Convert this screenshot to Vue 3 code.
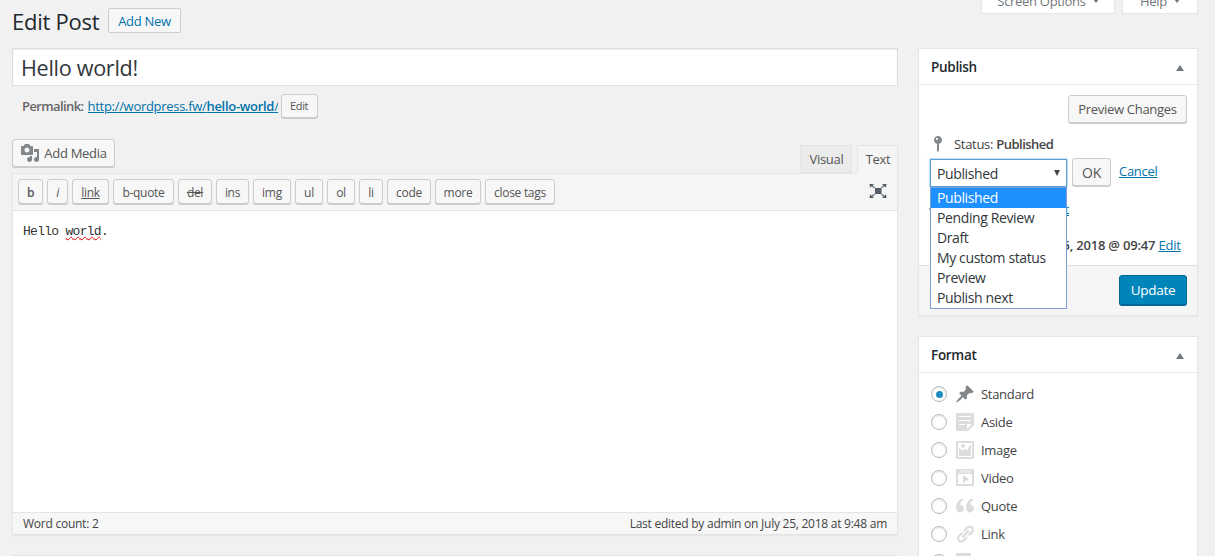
<script setup>
const tools = [
  { t: 'b', w: 25, c: 'bold' }, { t: 'i', w: 21, c: 'ital' }, { t: 'link', w: 37, c: 'ul' },
  { t: 'b-quote', w: 61 }, { t: 'del', w: 34, c: 'strike' }, { t: 'ins', w: 33 }, { t: 'img', w: 38 },
  { t: 'ul', w: 28 }, { t: 'ol', w: 28 }, { t: 'li', w: 24 }, { t: 'code', w: 44 }, { t: 'more', w: 46 }, { t: 'close tags', w: 70 }
]
const options = ['Published', 'Pending Review', 'Draft', 'My custom status', 'Preview', 'Publish next']
const formats = [
  { t: 'Standard', on: true, d: 'M10.44 3.02l1.82-1.82 6.36 6.35-1.83 1.82c-1.05-.68-2.48-.57-3.41.36l-.75.75c-.92.93-1.04 2.35-.35 3.41l-1.83 1.82-2.41-2.41-2.8 2.79c-.42.42-3.38 2.71-3.8 2.29s1.86-3.39 2.28-3.81l2.79-2.79L4.1 9.36l1.83-1.82c1.05.69 2.48.57 3.4-.36l.75-.75c.93-.92 1.05-2.35.36-3.41z' },
  { t: 'Aside', d: 'M1 1h18v12l-6 6H1V1zm3 3v1h12V4H4zm0 4v1h12V8H4zm6 5v-1H4v1h6zm2 4l5-5h-5v5z' },
  { t: 'Image', d: 'M2.25 1h15.5c.69 0 1.25.56 1.25 1.25v15.5c0 .69-.56 1.25-1.25 1.25H2.25C1.56 19 1 18.44 1 17.75V2.25C1 1.56 1.56 1 2.25 1zM17 17V3H3v14h14zM10 6c0-1.1-.9-2-2-2s-2 .9-2 2 .9 2 2 2 2-.9 2-2zm3 5s0-6 3-6v10c0 .55-.45 1-1 1H5c-.55 0-1-.45-1-1V8c2 0 3 4 3 4s1-3 3-3 3 2 3 2z' },
  { t: 'Video', d: 'M2 1h16c.55 0 1 .45 1 1v16l-18-.02V2c0-.55.45-1 1-1zm4 1L4 5h1l2-3H6zm4 0H9L7 5h1zm3 0h-1l-2 3h1zm3 0h-1l-2 3h1zm1 14V6H3v10h14zM8 7l6 4-6 4V7z' },
  { t: 'Quote', d: 'M9 12.600c0 2.100-1.800 3.900-4 3.900-2.500 0-4-2-4-5C1 7 3.800 3.300 7.800 2.500l.6 1.600C6.400 5 5.300 6.700 5.200 8.700 7.300 8.600 9 10.400 9 12.600zm10 0c0 2.100-1.800 3.900-4 3.900-2.500 0-4-2-4-5 0-4.500 2.800-8.200 6.800-9l.6 1.600c-2 .9-3.100 2.600-3.200 4.600 2.100-.1 3.800 1.700 3.800 3.900z' },
  { t: 'Link', d: 'M17.740 2.760c1.680 1.690 1.680 4.410 0 6.100l-1.530 1.520c-1.120 1.120-2.700 1.470-4.140 1.090l2.620-2.610.76-.77.76-.76c.84-.84.84-2.200 0-3.040-.84-.85-2.200-.85-3.040 0l-.77.76-3.380 3.380c-.37-1.440-.02-3.020 1.100-4.140l1.520-1.530c1.690-1.680 4.420-1.680 6.100 0zM8.590 13.430l5.340-5.340c.42-.42.42-1.100 0-1.520-.44-.43-1.130-.39-1.530 0l-5.330 5.340c-.42.42-.42 1.100 0 1.520.44.43 1.130.39 1.520 0zm-.76 2.290l4.140-4.150c.38 1.440.03 3.020-1.090 4.140l-1.520 1.530c-1.690 1.680-4.410 1.680-6.100 0-1.680-1.680-1.680-4.420 0-6.100l1.530-1.520c1.120-1.120 2.700-1.470 4.140-1.100l-4.140 4.150c-.85.84-.85 2.200 0 3.050.84.84 2.200.84 3.040 0z' },
  { t: 'Gallery', d: 'M16 4h1.960c.57 0 1.040.47 1.040 1.040v12.920c0 .57-.47 1.040-1.040 1.040H5.040C4.470 19 4 18.530 4 17.960V16H2.040C1.470 16 1 15.530 1 14.960V2.040C1 1.470 1.470 1 2.040 1h12.920c.57 0 1.040.47 1.040 1.040V4z' }
]
</script>

<template>
  <div class="page">
    <main class="main">
      <div class="head">
        <h1>Edit Post</h1>
        <a class="btn add-new">Add New</a>
      </div>
      <div class="title">Hello world!</div>
      <div class="permalink">
        <strong>Permalink:</strong>
        <a class="plink">http://wordpress.fw/<b>hello-world</b>/</a>
        <span class="btn small">Edit</span>
      </div>
      <div class="media-row">
        <span class="btn add-media">
          <svg viewBox="0 0 20 20" width="20" height="20"><path d="M13 11V4c0-.55-.45-1-1-1h-1.670L9 1H5L3.670 3H2c-.55 0-1 .45-1 1v7c0 .55.45 1 1 1h10c.55 0 1-.45 1-1zM7 4.500c1.380 0 2.500 1.120 2.500 2.500S8.380 9.500 7 9.500 4.500 8.380 4.500 7 5.620 4.500 7 4.500zM14 6h5v10.500c0 1.380-1.120 2.500-2.500 2.500S14 17.880 14 16.500s1.120-2.500 2.500-2.500c.17 0 .34.02.5.05V9h-3V6zm-4 8.050V13h2v3.500c0 1.380-1.120 2.500-2.500 2.500S7 17.880 7 16.500 8.120 14 9.500 14c.17 0 .34.02.5.05z"/></svg>
          Add Media
        </span>
        <div class="tabs">
          <span class="tab">Visual</span>
          <span class="tab active">Text</span>
        </div>
      </div>
      <section class="editor">
        <div class="toolbar">
          <span v-for="b in tools" :key="b.t" class="tool" :class="b.c" :style="{ width: b.w + 'px' }">{{ b.t }}</span>
          <svg class="expand" viewBox="0 0 18 14" width="18" height="14">
            <rect x="6" y="4" width="6.500" height="6" fill="#555d66"/>
            <path d="M.5 0h4.500L3.500 1.500 6 3.600 5.300 4.200 2.600 2.200 1 3.700zM17.500 0H13l1.500 1.500L12 3.600l.7.6 2.700-2 1.600 1.500zM.5 14h4.500l-1.500-1.500L6 10.400l-.7-.6-2.700 2L1 10.300zM17.500 14H13l1.500-1.500-2.500-2.100.7-.6 2.700 2 1.600-1.500z" fill="#555d66"/>
          </svg>
        </div>
        <div class="content">Hello <span class="spell">world</span>.</div>
        <div class="status"><span>Word count: 2</span><span>Last edited by admin on July 25, 2018 at 9:48 am</span></div>
      </section>
      <div class="next-box"></div>
    </main>

    <aside class="side">
      <div class="meta">
        <span class="meta-tab so">Screen Options <i class="tri"></i></span>
        <span class="meta-tab help">Help <i class="tri"></i></span>
      </div>

      <section class="box publish">
        <header class="box-head"><h2>Publish</h2><i class="up"></i></header>
        <div class="pub-body">
          <div class="preview-row"><span class="btn preview">Preview Changes</span></div>
          <div class="pub-row status-row">
            <svg class="ico" viewBox="0 0 20 20" width="20" height="20"><path d="M14 6c0 1.860-1.280 3.410-3 3.860V16c0 1-2 2-2 2V9.860c-1.720-.45-3-2-3-3.860 0-2.210 1.790-4 4-4s4 1.790 4 4zM8 5c0 .55.45 1 1 1s1-.45 1-1-.45-1-1-1-1 .45-1 1z"/></svg>
            <span>Status: <b>Published</b></span>
          </div>
          <div class="select-row">
            <div class="select-wrap">
              <div class="select">Published<i class="caret"></i></div>
              <ul class="dropdown">
                <li v-for="(o, i) in options" :key="o" :class="{ sel: i === 0 }">{{ o }}</li>
              </ul>
            </div>
            <span class="btn ok">OK</span>
            <a class="cancel">Cancel</a>
          </div>
          <div class="pub-row vis-row">
            <svg class="ico" viewBox="0 0 20 20" width="20" height="20"><path d="M19 10c-2 3.500-5.200 6-9 6s-7-2.500-9-6c2-3.500 5.200-6 9-6s7 2.500 9 6z"/></svg>
            <span>Visibility: <b>Public</b> <a>Edit</a></span>
          </div>
          <div class="pub-row date-row">
            <svg class="ico" viewBox="0 0 20 20" width="20" height="20"><path d="M3 4h14v13H3z"/></svg>
            <span>Published on: <b>Jul 25, 2018 @ 09:47</b> <a>Edit</a></span>
          </div>
        </div>
        <footer class="pub-foot">
          <a class="trash">Move to Trash</a>
          <span class="update">Update</span>
        </footer>
      </section>

      <section class="box format">
        <header class="box-head"><h2>Format</h2><i class="up"></i></header>
        <ul class="formats">
          <li v-for="f in formats" :key="f.t">
            <span class="radio" :class="{ on: f.on }"></span>
            <svg viewBox="0 0 20 20" width="20" height="20" :fill="f.on ? '#82878c' : '#dcdcdc'"><path :d="f.d"/></svg>
            <span>{{ f.t }}</span>
          </li>
        </ul>
      </section>
    </aside>
  </div>
</template>

<style>
html, body { margin: 0; background: #f1f1f1; }
</style>

<style scoped>
.page {
  display: flex; gap: 20px; height: 556px; overflow: hidden; padding: 0 17px 0 12px; box-sizing: border-box;
  background: #f1f1f1; color: #444; font: 13px/1.4 "Open Sans", "Noto Sans", sans-serif; letter-spacing: -.3px;
}
.main { width: 886px; flex: none; }
.side { width: 280px; flex: none; }
h1, h2, ul { margin: 0; padding: 0; font-weight: 400; }
ul { list-style: none; }

.btn {
  display: inline-flex; align-items: center; justify-content: center; box-sizing: border-box;
  background: #f7f7f7; border: 1px solid #ccc; border-radius: 3px; box-shadow: 0 1px 0 #ccc; color: #555;
}
.head { display: flex; align-items: center; gap: 12px; padding-top: 8px; height: 25px; }
h1 { font-size: 22px; line-height: 27px; height: 25px; color: #23282d; letter-spacing: -.25px; width: 84px; white-space: nowrap; }
.add-new { width: 73px; height: 25px; padding-top: 2px; color: #0073aa; border-radius: 2px; box-shadow: none; background: #f7f7f7; }
.title {
  margin-top: 15px; height: 38px; box-sizing: border-box; padding: 1px 8px 0; background: #fff; border: 1px solid #ddd;
  font-size: 21.6px; line-height: 36px; color: #32373c; box-shadow: inset 0 1px 2px rgba(0,0,0,.07);
}
.permalink { display: flex; align-items: center; height: 24px; margin-top: 8px; padding-left: 10px; color: #666; white-space: nowrap; }
.permalink strong { font-weight: 600; margin-right: 4px; letter-spacing: -.6px; }
.plink { color: #0073aa; text-decoration: underline; width: 190px; overflow: hidden; }
.plink b { font-weight: 600; }
.small { margin-left: 3px; width: 37px; height: 24px; font-size: 11px; }

.media-row { display: flex; justify-content: space-between; align-items: flex-end; margin-top: 21px; height: 34px; position: relative; z-index: 1; }
.add-media { align-self: flex-start; width: 103px; height: 28px; gap: 4px; font-size: 13px; }
.add-media svg { fill: #82878c; }
.tabs { display: flex; gap: 5px; height: 29px; margin-bottom: -1px; }
.tab {
  display: flex; align-items: center; justify-content: center; box-sizing: border-box; height: 28px; width: 52px; padding-left: 1px;
  background: #ebebeb; border: 1px solid #e5e5e5; color: #555;
}
.tab.active { width: 41px; height: 29px; background: #f5f5f5; border-bottom-color: #f5f5f5; }

.editor { background: #fff; border: 1px solid #e5e5e5; border-top: 0; box-shadow: 0 1px 1px rgba(0,0,0,.04); }
.toolbar {
  display: flex; gap: 4px; align-items: flex-start; position: relative; height: 38px; box-sizing: border-box; padding: 5px 0 0 5px;
  background: #f5f5f5; border-top: 1px solid #e5e5e5; border-bottom: 1px solid #e5e5e5;
}
.tool {
  display: flex; align-items: center; justify-content: center; box-sizing: border-box; height: 25px; padding-top: 3px;
  background: #f7f7f7; border: 1px solid #ccc; border-radius: 3px; box-shadow: 0 1px 0 #ccc; color: #555; font-size: 12px;
}
.tool.bold { font-weight: 600; }
.tool.ital { font-style: italic; }
.tool.ul { text-decoration: underline; }
.tool.strike { text-decoration: line-through; }
.expand { position: absolute; right: 10px; top: 10px; }
.content { height: 301px; box-sizing: border-box; padding: 11px 10px; font: 13px/20px "Liberation Mono", monospace; letter-spacing: -.72px; color: #333; }
.spell { text-decoration: underline wavy #d00 1px; }
.status {
  display: flex; justify-content: space-between; height: 22px; box-sizing: border-box; padding: 1px 10px 0; align-items: center;
  background: #f7f7f7; border-top: 1px solid #e5e5e5; font-size: 12px; letter-spacing: -.25px; color: #444;
}
.next-box { margin-top: 20px; height: 30px; background: #fff; border: 1px solid #e5e5e5; }

.meta { display: flex; justify-content: flex-end; gap: 7px; height: 14px; overflow: hidden; align-items: flex-end; }
.meta-tab {
  display: flex; align-items: center; justify-content: center; gap: 7px; box-sizing: border-box; height: 24px; flex: none;
  background: #fff; border: 1px solid #e5e5e5; border-top: 0; color: #72777c; box-shadow: 0 1px 1px rgba(0,0,0,.04);
}
.so { width: 134px; }
.help { width: 76px; }
.tri { width: 0; height: 0; margin-bottom: 2px; border-left: 3px solid transparent; border-right: 3px solid transparent; border-top: 4px solid #72777c; }

.box { background: #fff; border: 1px solid #e5e5e5; box-shadow: 0 1px 1px rgba(0,0,0,.04); }
.publish { margin-top: 34px; height: 268px; box-sizing: border-box; display: flex; flex-direction: column; }
.box-head { display: flex; justify-content: space-between; align-items: center; height: 36px; box-sizing: border-box; padding: 2px 12px 0; border-bottom: 1px solid #eee; flex: none; }
.box-head h2 { font-size: 13.500px; font-weight: 600; color: #23282d; }
.up { width: 0; height: 0; border-left: 4.500px solid transparent; border-right: 4.500px solid transparent; border-bottom: 6px solid #72777c; margin-right: 1px; }

.pub-body { flex: 1; padding: 10px 10px 0 11px; }
.preview-row { display: flex; justify-content: flex-end; }
.preview { width: 119px; height: 28px; }
.pub-row { display: flex; align-items: center; gap: 6px; height: 20px; white-space: nowrap; }
.pub-row b { font-weight: 600; }
.status-row b { letter-spacing: -.5px; }
.pub-row a { color: #0073aa; text-decoration: underline; }
.ico { fill: #82878c; flex: none; margin-left: -2px; }
.status-row { margin-top: 11px; }
.select-row { display: flex; align-items: flex-start; margin-top: 4px; height: 28px; position: relative; }
.select-wrap { position: relative; width: 137px; height: 28px; margin-top: 1px; z-index: 2; flex: none; }
.select {
  height: 28px; box-sizing: border-box; padding-left: 6px; font-size: 14px; line-height: 27px; letter-spacing: -.38px; color: #32373c; background: #fff;
  border: 1px solid #5b9dd9; box-shadow: 0 0 2px rgba(30,140,190,.8); position: relative;
}
.caret { position: absolute; right: 6px; top: 10px; width: 0; height: 0; border-left: 3.500px solid transparent; border-right: 3.500px solid transparent; border-top: 6px solid #444; }
.dropdown {
  position: absolute; top: 28px; left: 0; width: 137px; box-sizing: border-box; background: #fff; border: 1px solid #7c9fd6;
  font-size: 14px; line-height: 20px; letter-spacing: -.38px; color: #32373c;
}
.dropdown li { height: 20px; padding-left: 6px; }
.dropdown li.sel { background: #1e90ff; color: #fff; }
.ok { margin-left: 5px; width: 39px; height: 28px; padding-top: 1px; font-size: 14px; }
.cancel { margin: 4px 0 0 8px; color: #0073aa; text-decoration: underline; }
.vis-row { margin-top: 13px; letter-spacing: -.25px; }
.date-row { margin-top: 16px; letter-spacing: -.2px; }
.pub-foot {
  display: flex; justify-content: space-between; align-items: flex-start; height: 50px; box-sizing: border-box; padding: 9px 10px 0; flex: none;
  background: #f5f5f5; border-top: 1px solid #ddd;
}
.trash { color: #a00; white-space: nowrap; margin-top: 10px; }
.update {
  display: flex; align-items: center; justify-content: center; width: 68px; height: 30px; box-sizing: border-box; border-radius: 3px;
  background: #0085ba; border: 1px solid #006799; box-shadow: 0 1px 0 #006799; color: #fff; font-size: 13.500px;
}
.format { margin-top: 20px; }
.formats { padding: 7px 12px 0; }
.formats li { display: flex; align-items: center; height: 28px; white-space: nowrap; color: #444; }
.formats svg { margin: 0 6px 0 8px; flex: none; }
.radio { width: 16px; height: 16px; box-sizing: border-box; border-radius: 50%; border: 1px solid #b4b9be; background: #fff; box-shadow: inset 0 1px 2px rgba(0,0,0,.1); flex: none; position: relative; }
.radio.on::after { content: ""; position: absolute; left: 3.500px; top: 3.500px; width: 7px; height: 7px; border-radius: 50%; background: #1e8cbe; }
</style>
